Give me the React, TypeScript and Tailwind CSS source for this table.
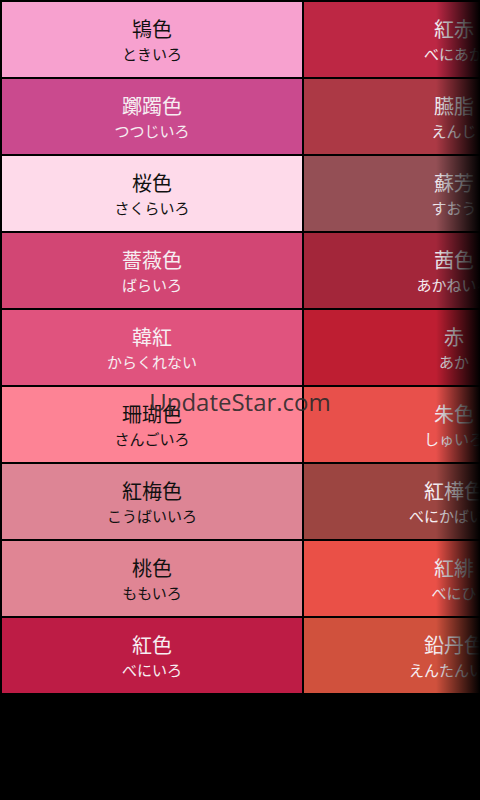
const rows: [string, string, string, boolean][][] = [
  [['鴇色', 'ときいろ', '#f7a1cf', true], ['紅赤', 'べにあか', '#bd2744', false]],
  [['躑躅色', 'つつじいろ', '#ca4a8e', false], ['臙脂', 'えんじ', '#ac3945', false]],
  [['桜色', 'さくらいろ', '#fedaea', true], ['蘇芳', 'すおう', '#944f55', false]],
  [['薔薇色', 'ばらいろ', '#d24674', false], ['茜色', 'あかねいろ', '#a3263a', false]],
  [['韓紅', 'からくれない', '#e0537e', false], ['赤', 'あか', '#be1e32', false]],
  [['珊瑚色', 'さんごいろ', '#fd8395', true], ['朱色', 'しゅいろ', '#e8504b', false]],
  [['紅梅色', 'こうばいいろ', '#dd8595', true], ['紅樺色', 'べにかばいろ', '#9c4541', false]],
  [['桃色', 'ももいろ', '#e08594', true], ['紅緋', 'べにひ', '#ea5047', false]],
  [['紅色', 'べにいろ', '#bd1c45', false], ['鉛丹色', 'えんたんいろ', '#d0513d', false]],
]

function Cell({ name, kana, color, dark }: { name: string; kana: string; color: string; dark: boolean }) {
  return (
    <div
      className={`h-[75px] flex flex-col items-center justify-center pt-[2px] ${dark ? 'text-[#111]' : 'text-[#f6eef2]'}`}
      style={{ backgroundColor: color }}
    >
      <div className="text-[20px] leading-[26px]">{name}</div>
      <div className="text-[15px] leading-[24px]">{kana}</div>
    </div>
  )
}

export default function App() {
  return (
    <div
      className="relative w-[480px] h-[800px] bg-black overflow-hidden"
      style={{ fontFamily: '"Noto Sans CJK JP", "Noto Sans", sans-serif' }}
    >
      <div className="grid grid-cols-[300px_300px] gap-[2px] p-[2px] w-[606px]">
        {rows.map((row, i) =>
          row.map(([name, kana, color, dark], j) => (
            <Cell key={`${i}-${j}`} name={name} kana={kana} color={color} dark={dark} />
          ))
        )}
      </div>

      {/* right edge fade */}
      <div className="absolute top-0 right-0 h-[695px] w-[44px] bg-gradient-to-r from-transparent to-black" />

      {/* watermark */}
      <div
        className="absolute left-0 right-0 top-[386px] text-center text-[24px] leading-[32px] text-[#2a2a2a]/90"
        style={{ fontFamily: '"Open Sans", sans-serif' }}
      >
        UpdateStar.com
      </div>
    </div>
  )
}
